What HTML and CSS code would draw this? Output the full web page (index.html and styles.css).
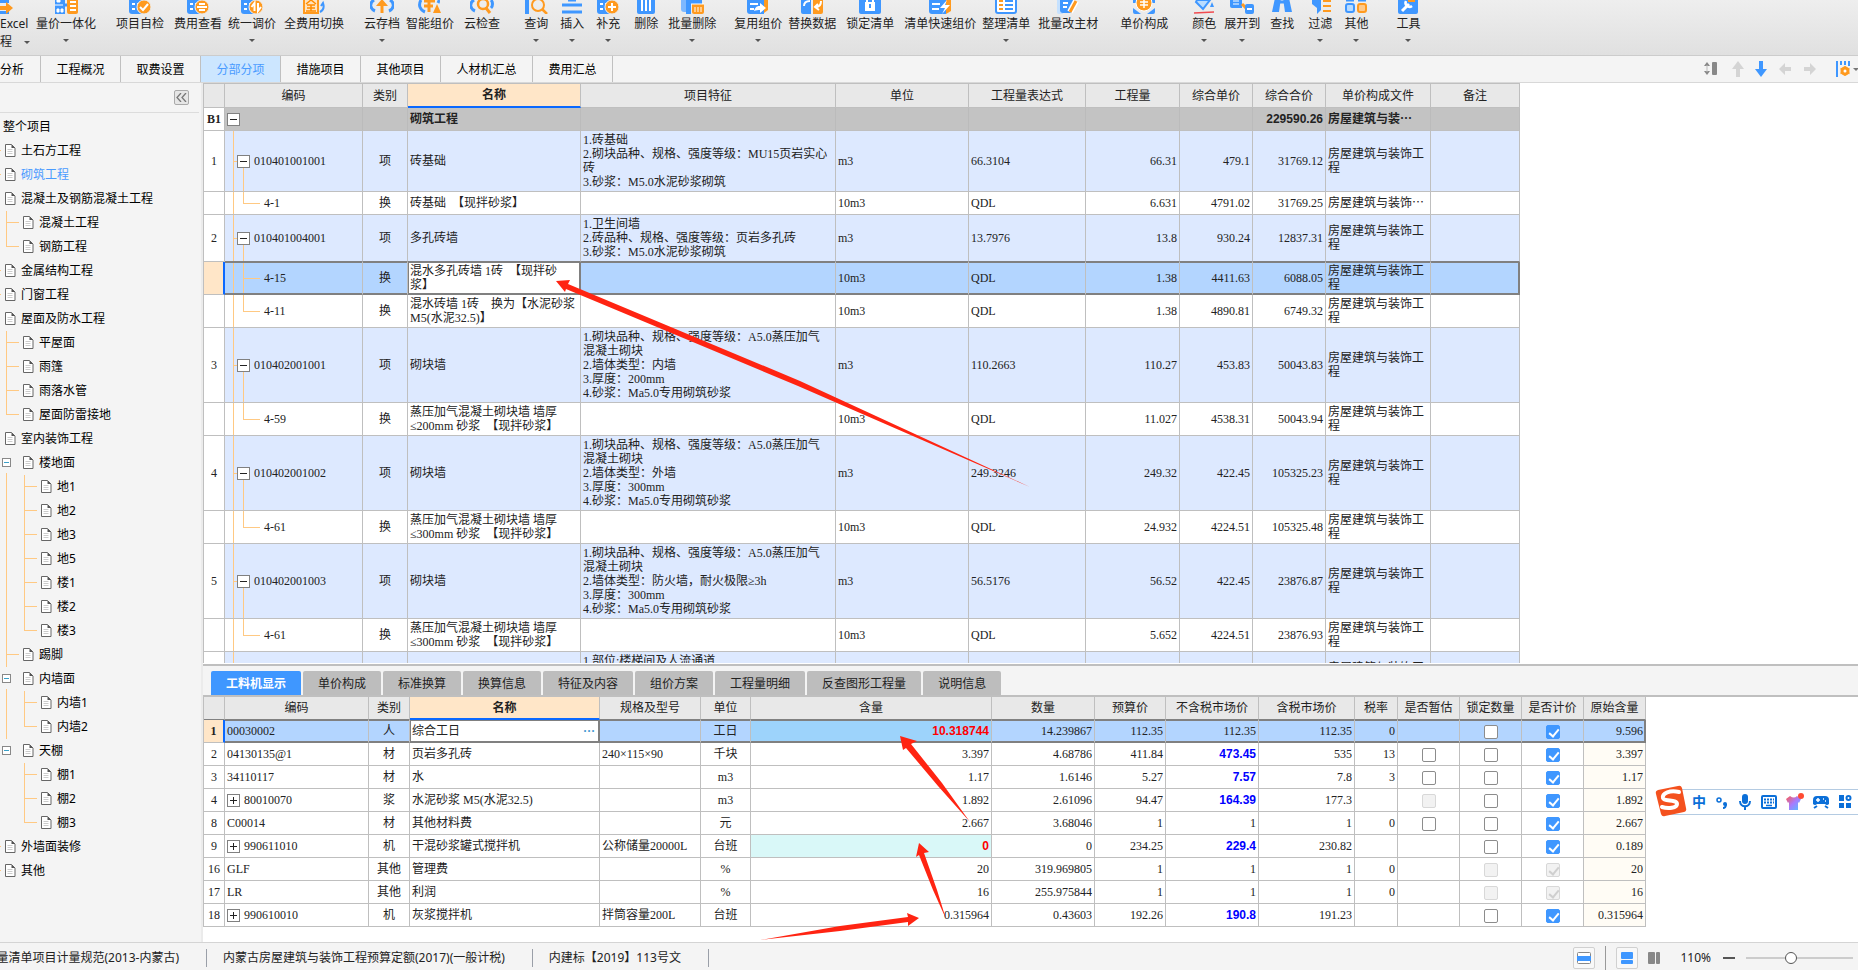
FILE: index.html
```html
<!DOCTYPE html>
<html lang="zh-CN">
<head>
<meta charset="utf-8">
<title>分部分项</title>
<link rel="stylesheet" href="styles.css">
</head>
<body>
<svg class="defs" aria-hidden="true">
  <symbol id="doc" viewBox="0 0 11 13"><path d="M.5 .5h6l3.500 3.500v8.500H.5z" fill="#fff" stroke="#666"/><path d="M6.500 .5v3.500H10z" fill="#555"/><path d="M2.500 5.500h5M2.500 7.500h5M2.500 9.500h5" stroke="#ccc"/></symbol>
  <symbol id="list" viewBox="0 0 24 14"><path d="M1 0h17v14H4a3 3 0 0 1-3-3z" fill="#3f97ff"/><path d="M4 4h3M9 4h8M4 9h3M9 9h5" stroke="#fff" stroke-width="2"/></symbol>
</svg>

<header class="toolbar">
  <button class="tool tool-first"><svg class="tool-icon" viewBox="0 0 24 14"><path d="M0 0h9v3H0zM0 11h9v3H0z" fill="#3f97ff"/><path d="M0 6h6V2l7 6-7 6v-4H0z" fill="#ff9a1f"/></svg><span>Excel</span><span class="second">程<i class="caret"></i></span></button>
  <button class="tool gap-8"><svg class="tool-icon" viewBox="0 0 24 14"><path d="M1 0h10v14H1z" fill="#3f97ff"/><path d="M3 0h3v2H3zM3 9h2v3H3zM7 9h2v3H7zM1 5h9" fill="#fff" stroke="#fff" stroke-width="1"/><path d="M9 5h5" stroke="#3f97ff" stroke-width="3"/><rect x="13" y="-2" width="11" height="16" rx="2" fill="#ff9a1f"/><path d="M16 2h6M16 6h6M16 10h6" stroke="#fff" stroke-width="2"/></svg><span>量价一体化</span><i class="caret"></i></button>
  <button class="tool gap-20"><svg class="tool-icon" viewBox="0 0 24 14"><use href="#list"/><circle cx="16" cy="7" r="7" fill="#ff9a1f" stroke="#eee"/><path d="M12 7l3 3 5-6" fill="none" stroke="#fff" stroke-width="2"/></svg><span>项目自检</span></button>
  <button class="tool gap-10"><svg class="tool-icon" viewBox="0 0 24 14"><use href="#list"/><circle cx="16" cy="7" r="7" fill="#ff9a1f" stroke="#eee"/><path d="M11 7h10M13 4h6M13 10h6" fill="none" stroke="#fff" stroke-width="2"/></svg><span>费用查看</span></button>
  <button class="tool gap-6"><svg class="tool-icon" viewBox="0 0 24 14"><use href="#list"/><circle cx="16" cy="7" r="7" fill="#ff9a1f" stroke="#eee"/><path d="M14.500 11V3l-3 4M18 3v8l3-4" fill="none" stroke="#fff" stroke-width="2"/></svg><span>统一调价</span><i class="caret"></i></button>
  <button class="tool gap-8"><svg class="tool-icon" viewBox="0 0 24 14"><path d="M2 0v13h14V0" fill="#ffe3bf" stroke="#ff9a1f" stroke-width="2"/><path d="M9 0L4 4M9 0l5 4M5 5h8M5 8h8M4 11h10M9 5v6" fill="none" stroke="#ff8c00" stroke-width="1.500"/><path d="M18 12c4-2 4-6 3-9l-2 3" fill="none" stroke="#3f97ff" stroke-width="2"/></svg><span>全费用切换</span></button>
  <button class="tool gap-20"><svg class="tool-icon" viewBox="0 0 24 14"><path d="M5 11C0 9-1 3 4 0M19 11c5-2 6-8 1-11" fill="none" stroke="#3f97ff" stroke-width="3"/><path d="M12-1l6 7h-4.500v7h-3V6H6z" fill="#ff9a1f"/></svg><span>云存档</span><i class="caret"></i></button>
  <button class="tool gap-6"><svg class="tool-icon" viewBox="0 0 24 14"><path d="M7 12C2 10 0 5 3 0M20 3c1-2 1-2 0-3" fill="none" stroke="#3f97ff" stroke-width="3"/><path d="M6 1h11M6 6h9M11 0v12" stroke="#ff9a1f" stroke-width="3"/><path d="M19 4l4 9h-8z" fill="#ff9a1f"/></svg><span>智能组价</span></button>
  <button class="tool gap-10"><svg class="tool-icon" viewBox="0 0 24 14"><path d="M5 11C0 9-1 3 4 0M21 8c2-2 2-6 0-8" fill="none" stroke="#3f97ff" stroke-width="3"/><circle cx="13" cy="4" r="5" fill="none" stroke="#ff9a1f" stroke-width="2.500"/><path d="M16 8l4 5" stroke="#ff9a1f" stroke-width="3"/></svg><span>云检查</span></button>
  <button class="tool gap-24"><svg class="tool-icon" viewBox="0 0 24 14"><path d="M3 0v14" stroke="#3f97ff" stroke-width="4"/><circle cx="14" cy="5" r="6" fill="none" stroke="#ff9a1f" stroke-width="2"/><path d="M18 9l5 5" stroke="#ff9a1f" stroke-width="2.500"/></svg><span>查询</span><i class="caret"></i></button>
  <button class="tool gap-12"><svg class="tool-icon" viewBox="0 0 24 14"><path d="M2 5h20M2 12h20" stroke="#3f97ff" stroke-width="3"/><path d="M8 0h8" stroke="#3f97ff" stroke-width="3"/></svg><span>插入</span><i class="caret"></i></button>
  <button class="tool gap-12"><svg class="tool-icon" viewBox="0 0 24 14"><use href="#list"/><circle cx="16" cy="7" r="7" fill="#ff9a1f" stroke="#eee"/><path d="M12 7h8M16 3v8" stroke="#fff" stroke-width="2"/></svg><span>补充</span><i class="caret"></i></button>
  <button class="tool gap-14"><svg class="tool-icon" viewBox="0 0 24 14"><path d="M3-2h18v14a2 2 0 0 1-2 2H5a2 2 0 0 1-2-2z" fill="#3f97ff"/><path d="M8 0v11M12 0v11M16 0v11" stroke="#fff" stroke-width="2"/></svg><span>删除</span></button>
  <button class="tool gap-10"><svg class="tool-icon" viewBox="0 0 24 14"><path d="M1 0h9v12H4a3 3 0 0 1-3-3z" fill="#7db8ff"/><path d="M6 0h16v4H11v10H6z" fill="#3f97ff"/><path d="M12 4h12v8a2 2 0 0 1-2 2h-8a2 2 0 0 1-2-2z" fill="#ff9a1f"/><path d="M11 4h13M15 7v5M18 7v5M21 7v5" stroke="#fff" stroke-width="1"/></svg><span>批量删除</span><i class="caret"></i></button>
  <button class="tool gap-18"><svg class="tool-icon" viewBox="0 0 24 14"><path d="M1 0h17v14H4a3 3 0 0 1-3-3z" fill="#3f97ff"/><path d="M18 0h4v10l-4 3z" fill="#ff9a1f"/><path d="M4 4h8M4 9h4" stroke="#fff" stroke-width="2"/><path d="M8 11c2-6 5-5 6-5V3l6 5-6 5v-3c-2 0-4 0-6 1z" fill="#fff"/></svg><span>复用组价</span><i class="caret"></i></button>
  <button class="tool gap-6"><svg class="tool-icon" viewBox="0 0 24 14"><path d="M1 0h10v14H3a2 2 0 0 1-2-2z" fill="#3f97ff"/><path d="M13 0h10v12a2 2 0 0 1-2 2h-8z" fill="#ff9a1f"/><path d="M4 6c0-4 3-5 6-5M21 1c0 4-2 6-5 6m2-3l-3 3 4 3" fill="none" stroke="#fff" stroke-width="2"/></svg><span>替换数据</span></button>
  <button class="tool gap-10"><svg class="tool-icon" viewBox="0 0 24 14"><path d="M1-2h22v14a2 2 0 0 1-2 2H3a2 2 0 0 1-2-2z" fill="#3f97ff"/><path d="M7 2h10v9H7z" fill="#fff"/><path d="M9 3V-2M15 3V-2" stroke="#fff" stroke-width="2"/><path d="M12 4v4" stroke="#3f97ff" stroke-width="2"/></svg><span>锁定清单</span></button>
  <button class="tool gap-10"><svg class="tool-icon" viewBox="0 0 24 14"><path d="M1 0h17v14H4a3 3 0 0 1-3-3z" fill="#3f97ff"/><path d="M18 0h5v11l-5 3z" fill="#ff9a1f"/><path d="M4 4h8M4 9h7" stroke="#fff" stroke-width="2"/><path d="M19 0l-7 8h5l-3 6 8-9h-5z" fill="#fff"/></svg><span>清单快速组价</span></button>
  <button class="tool gap-6"><svg class="tool-icon" viewBox="0 0 24 14"><path d="M2-2v13a2 2 0 0 0 2 2h16a2 2 0 0 0 2-2V-2" fill="#fff" stroke="#3f97ff" stroke-width="2"/><path d="M5 1h4M5 5h4M5 9h4" stroke="#ff9a1f" stroke-width="2"/><path d="M11 1h8M11 5h8M11 9h8" stroke="#3f97ff" stroke-width="2"/></svg><span>整理清单</span><i class="caret"></i></button>
  <button class="tool gap-8"><svg class="tool-icon" viewBox="0 0 24 14"><path d="M1 0h6v14H3a2 2 0 0 1-2-2z" fill="#c5e1ff"/><path d="M4 0h13v13H7a3 3 0 0 1-3-3z" fill="#3f97ff"/><path d="M7 3h5M7 7h4" stroke="#fff" stroke-width="2"/><path d="M20 1l-6 11" stroke="#fff" stroke-width="6"/><path d="M20 1l-6 11" stroke="#ff9a1f" stroke-width="3"/></svg><span>批量改主材</span></button>
  <button class="tool gap-22"><svg class="tool-icon" viewBox="0 0 24 14"><path d="M1 0h22v3H1zM1 8l8 6H3a2 2 0 0 1-2-2zM23 8l-8 6h6a2 2 0 0 0 2-2z" fill="#3f97ff"/><circle cx="12" cy="3" r="8" fill="#ff9a1f" stroke="#fff"/><path d="M8 2h8M8 5h8M12-1v9" stroke="#fff" stroke-width="1.500"/></svg><span>单价构成</span></button>
  <button class="tool gap-24"><svg class="tool-icon" viewBox="0 0 24 14"><path d="M4 2l7 7 7-9H5z" fill="#b9dcff" stroke="#3f97ff" stroke-width="2"/><path d="M20 2l2 5h-4z" fill="#3f97ff"/><path d="M2 13l20-1" stroke="#f04b50" stroke-width="1.500"/></svg><span>颜色</span><i class="caret"></i></button>
  <button class="tool gap-8"><svg class="tool-icon" viewBox="0 0 24 14"><path d="M0-2h12v10H2a2 2 0 0 1-2-2z" fill="#3f97ff"/><path d="M3 1h6M3 4h6" stroke="#fff"/><path d="M12 4l4 4" stroke="#ff9a1f" stroke-width="3"/><rect x="15" y="4" width="9" height="10" rx="2" fill="#3f97ff"/><path d="M17 9h5" stroke="#fff" stroke-width="2"/></svg><span>展开到</span><i class="caret"></i></button>
  <button class="tool gap-10"><svg class="tool-icon" viewBox="0 0 24 14"><path d="M5-2h6l-2 14H2zM13-2h6l3 14h-7z" fill="#3f97ff"/><path d="M9 2h6" stroke="#3f97ff" stroke-width="3"/></svg><span>查找</span></button>
  <button class="tool gap-14"><svg class="tool-icon" viewBox="0 0 24 14"><path d="M4-2h9v12l-4 4V8L4 4z" fill="#3f97ff"/><path d="M15 1h8M15 6h8M15 11h8" stroke="#ff9a1f" stroke-width="2"/></svg><span>过滤</span><i class="caret"></i></button>
  <button class="tool gap-12"><svg class="tool-icon" viewBox="0 0 24 14"><rect x="2" y="4" width="8" height="8" rx="2" fill="#b9dcff" stroke="#3f97ff" stroke-width="2"/><rect x="14" y="4" width="8" height="8" rx="2" fill="#ffc98a" stroke="#ff9a1f" stroke-width="2"/><path d="M2 0h8M14 0h8" stroke="#3f97ff" stroke-width="3"/></svg><span>其他</span><i class="caret"></i></button>
  <button class="tool gap-28"><svg class="tool-icon" viewBox="0 0 24 14"><path d="M2 0h20v12a2 2 0 0 1-2 2H4a2 2 0 0 1-2-2z" fill="#3f97ff"/><path d="M12-1h7v3h-7z" fill="#ff9a1f"/><path d="M6 11l7-7" stroke="#fff" stroke-width="3"/><path d="M10 1a4 4 0 0 0 6 5" fill="none" stroke="#fff" stroke-width="2.500"/></svg><span>工具</span><i class="caret"></i></button>
</header>

<nav class="tabs">
  <button class="tab tab-cut">分析</button><button class="tab">工程概况</button><button class="tab">取费设置</button><button class="tab active">分部分项</button><button class="tab">措施项目</button><button class="tab">其他项目</button><button class="tab tab-wide">人材机汇总</button><button class="tab">费用汇总</button>
  <div class="tab-actions">
    <button class="height" aria-label="行高"><svg width="14" height="14" viewBox="0 0 14 14"><path d="M3 0l3 4H0zM3 13l3-4H0z" fill="#888"/><path d="M3 3v7" stroke="#bbb"/><rect x="8" y="0" width="5" height="13" rx="1" fill="#888"/></svg></button>
    <button aria-label="上移"><svg width="14" height="16" viewBox="0 0 14 16"><path d="M7 0l6 8H9v8H5V8H1z" fill="#d4d4d4"/></svg></button>
    <button aria-label="下移"><svg width="14" height="16" viewBox="0 0 14 16"><path d="M7 16l6-8H9V0H5v8H1z" fill="#3f97ff"/></svg></button>
    <button aria-label="左移"><svg width="16" height="14" viewBox="0 0 16 14"><path d="M2 7l6-6v4h6v4H8v4z" fill="#d4d4d4"/></svg></button>
    <button aria-label="右移"><svg width="16" height="14" viewBox="0 0 16 14"><path d="M14 7L8 1v4H2v4h6v4z" fill="#d4d4d4"/></svg></button>
    <button class="columns" aria-label="列设置"><svg width="22" height="16" viewBox="0 0 22 16"><path d="M1 0v16M5 0v4M9 0v4M13 0v5" stroke="#3f97ff" stroke-width="2"/><circle cx="9" cy="10" r="3" fill="none" stroke="#ff9a1f" stroke-width="3"/><path d="M9 5v10M4.500 7.500l9 5M4.500 12.500l9-5" stroke="#ff9a1f" stroke-width="1.500"/><circle cx="9" cy="10" r="1.500" fill="#fff"/><path d="M17 7h6l-3 3z" fill="#777"/></svg></button>
  </div>
</nav>

<div class="workspace">
  <aside class="sidebar">
    <div class="side-head"><button class="collapse" aria-label="收起"><svg width="11" height="9" viewBox="0 0 11 9"><path d="M5 0L1 4.500 5 9M10 0L6 4.500 10 9" fill="none" stroke="#777" stroke-width="1.300"/></svg></button></div>
    <ul class="tree">
      <li><div class="node root">整个项目</div></li>
      <li class="stub"><div class="node"><svg class="doc"><use href="#doc"/></svg>土石方工程</div></li>
      <li class="stub"><div class="node current"><svg class="doc"><use href="#doc"/></svg>砌筑工程</div></li>
      <li><div class="node"><svg class="doc"><use href="#doc"/></svg>混凝土及钢筋混凝土工程</div>
        <ul>
          <li><div class="node"><svg class="doc"><use href="#doc"/></svg>混凝土工程</div></li>
          <li><div class="node"><svg class="doc"><use href="#doc"/></svg>钢筋工程</div></li>
        </ul></li>
      <li class="stub"><div class="node"><svg class="doc"><use href="#doc"/></svg>金属结构工程</div></li>
      <li class="stub"><div class="node"><svg class="doc"><use href="#doc"/></svg>门窗工程</div></li>
      <li><div class="node"><svg class="doc"><use href="#doc"/></svg>屋面及防水工程</div>
        <ul>
          <li><div class="node"><svg class="doc"><use href="#doc"/></svg>平屋面</div></li>
          <li><div class="node"><svg class="doc"><use href="#doc"/></svg>雨篷</div></li>
          <li><div class="node"><svg class="doc"><use href="#doc"/></svg>雨落水管</div></li>
          <li><div class="node"><svg class="doc"><use href="#doc"/></svg>屋面防雷接地</div></li>
        </ul></li>
      <li><div class="node"><svg class="doc"><use href="#doc"/></svg>室内装饰工程</div>
        <ul>
          <li class="open"><div class="node"><button class="twist" aria-label="收起楼地面"></button><svg class="doc"><use href="#doc"/></svg>楼地面</div>
            <ul>
              <li><div class="node"><svg class="doc"><use href="#doc"/></svg>地1</div></li>
              <li><div class="node"><svg class="doc"><use href="#doc"/></svg>地2</div></li>
              <li><div class="node"><svg class="doc"><use href="#doc"/></svg>地3</div></li>
              <li><div class="node"><svg class="doc"><use href="#doc"/></svg>地5</div></li>
              <li><div class="node"><svg class="doc"><use href="#doc"/></svg>楼1</div></li>
              <li><div class="node"><svg class="doc"><use href="#doc"/></svg>楼2</div></li>
              <li><div class="node"><svg class="doc"><use href="#doc"/></svg>楼3</div></li>
            </ul></li>
          <li><div class="node"><svg class="doc"><use href="#doc"/></svg>踢脚</div></li>
          <li class="open"><div class="node"><button class="twist" aria-label="收起内墙面"></button><svg class="doc"><use href="#doc"/></svg>内墙面</div>
            <ul>
              <li><div class="node"><svg class="doc"><use href="#doc"/></svg>内墙1</div></li>
              <li><div class="node"><svg class="doc"><use href="#doc"/></svg>内墙2</div></li>
            </ul></li>
          <li class="open"><div class="node"><button class="twist" aria-label="收起天棚"></button><svg class="doc"><use href="#doc"/></svg>天棚</div>
            <ul>
              <li><div class="node"><svg class="doc"><use href="#doc"/></svg>棚1</div></li>
              <li><div class="node"><svg class="doc"><use href="#doc"/></svg>棚2</div></li>
              <li><div class="node"><svg class="doc"><use href="#doc"/></svg>棚3</div></li>
            </ul></li>
        </ul></li>
      <li class="stub"><div class="node"><svg class="doc"><use href="#doc"/></svg>外墙面装修</div></li>
      <li class="stub"><div class="node"><svg class="doc"><use href="#doc"/></svg>其他</div></li>
    </ul>
  </aside>

  <main class="main">
    <section class="upper">
      <table class="grid bill">
        <colgroup><col class="w-21"><col class="w-138"><col class="w-45"><col class="w-173"><col class="w-255"><col class="w-133"><col class="w-117"><col class="w-94"><col class="w-73"><col class="w-73"><col class="w-105"><col class="w-89"></colgroup>
        <thead><tr><th></th><th>编码</th><th>类别</th><th class="hot">名称</th><th>项目特征</th><th>单位</th><th>工程量表达式</th><th>工程量</th><th>综合单价</th><th>综合合价</th><th>单价构成文件</th><th>备注</th></tr></thead>
        <tbody>
          <tr class="part"><td class="idx">B1</td><td class="code"><button class="box" aria-label="收起"></button></td><td></td><td>砌筑工程</td><td></td><td></td><td></td><td></td><td></td><td class="num">229590.26</td><td>房屋建筑与装⋯</td><td></td></tr>
          <tr class="item"><td class="idx">1</td><td class="code parent"><button class="box" aria-label="收起"></button>010401001001</td><td class="mid">项</td><td>砖基础</td><td>1.砖基础<br>2.砌块品种、规格、强度等级：MU15页岩实心<br>砖<br>3.砂浆：M5.0水泥砂浆砌筑</td><td>m3</td><td>66.3104</td><td class="num">66.31</td><td class="num">479.1</td><td class="num">31769.12</td><td>房屋建筑与装饰工<br>程</td><td></td></tr>
          <tr><td class="idx"></td><td class="code child last">4-1</td><td class="mid">换</td><td>砖基础　【现拌砂浆】</td><td></td><td>10m3</td><td>QDL</td><td class="num">6.631</td><td class="num">4791.02</td><td class="num">31769.25</td><td>房屋建筑与装饰⋯</td><td></td></tr>
          <tr class="item before"><td class="idx">2</td><td class="code parent"><button class="box" aria-label="收起"></button>010401004001</td><td class="mid">项</td><td>多孔砖墙</td><td>1.卫生间墙<br>2.砖品种、规格、强度等级：页岩多孔砖<br>3.砂浆：M5.0水泥砂浆砌筑</td><td>m3</td><td>13.7976</td><td class="num">13.8</td><td class="num">930.24</td><td class="num">12837.31</td><td>房屋建筑与装饰工<br>程</td><td></td></tr>
          <tr class="sel"><td class="idx"></td><td class="code child">4-15</td><td class="mid">换</td><td class="edit">混水多孔砖墙 1砖　【现拌砂<br>浆】</td><td></td><td>10m3</td><td>QDL</td><td class="num">1.38</td><td class="num">4411.63</td><td class="num">6088.05</td><td>房屋建筑与装饰工<br>程</td><td></td></tr>
          <tr><td class="idx"></td><td class="code child last">4-11</td><td class="mid">换</td><td>混水砖墙 1砖　换为【水泥砂浆<br>M5(水泥32.5)】</td><td></td><td>10m3</td><td>QDL</td><td class="num">1.38</td><td class="num">4890.81</td><td class="num">6749.32</td><td>房屋建筑与装饰工<br>程</td><td></td></tr>
          <tr class="item"><td class="idx">3</td><td class="code parent"><button class="box" aria-label="收起"></button>010402001001</td><td class="mid">项</td><td>砌块墙</td><td>1.砌块品种、规格、强度等级：A5.0蒸压加气<br>混凝土砌块<br>2.墙体类型：内墙<br>3.厚度：200mm<br>4.砂浆：Ma5.0专用砌筑砂浆</td><td>m3</td><td>110.2663</td><td class="num">110.27</td><td class="num">453.83</td><td class="num">50043.83</td><td>房屋建筑与装饰工<br>程</td><td></td></tr>
          <tr><td class="idx"></td><td class="code child last">4-59</td><td class="mid">换</td><td>蒸压加气混凝土砌块墙 墙厚<br>≤200mm 砂浆　【现拌砂浆】</td><td></td><td>10m3</td><td>QDL</td><td class="num">11.027</td><td class="num">4538.31</td><td class="num">50043.94</td><td>房屋建筑与装饰工<br>程</td><td></td></tr>
          <tr class="item"><td class="idx">4</td><td class="code parent"><button class="box" aria-label="收起"></button>010402001002</td><td class="mid">项</td><td>砌块墙</td><td>1.砌块品种、规格、强度等级：A5.0蒸压加气<br>混凝土砌块<br>2.墙体类型：外墙<br>3.厚度：300mm<br>4.砂浆：Ma5.0专用砌筑砂浆</td><td>m3</td><td>249.3246</td><td class="num">249.32</td><td class="num">422.45</td><td class="num">105325.23</td><td>房屋建筑与装饰工<br>程</td><td></td></tr>
          <tr><td class="idx"></td><td class="code child last">4-61</td><td class="mid">换</td><td>蒸压加气混凝土砌块墙 墙厚<br>≤300mm 砂浆　【现拌砂浆】</td><td></td><td>10m3</td><td>QDL</td><td class="num">24.932</td><td class="num">4224.51</td><td class="num">105325.48</td><td>房屋建筑与装饰工<br>程</td><td></td></tr>
          <tr class="item"><td class="idx">5</td><td class="code parent"><button class="box" aria-label="收起"></button>010402001003</td><td class="mid">项</td><td>砌块墙</td><td>1.砌块品种、规格、强度等级：A5.0蒸压加气<br>混凝土砌块<br>2.墙体类型：防火墙，耐火极限≥3h<br>3.厚度：300mm<br>4.砂浆：Ma5.0专用砌筑砂浆</td><td>m3</td><td>56.5176</td><td class="num">56.52</td><td class="num">422.45</td><td class="num">23876.87</td><td>房屋建筑与装饰工<br>程</td><td></td></tr>
          <tr><td class="idx"></td><td class="code child last">4-61</td><td class="mid">换</td><td>蒸压加气混凝土砌块墙 墙厚<br>≤300mm 砂浆　【现拌砂浆】</td><td></td><td>10m3</td><td>QDL</td><td class="num">5.652</td><td class="num">4224.51</td><td class="num">23876.93</td><td>房屋建筑与装饰工<br>程</td><td></td></tr>
          <tr class="item"><td class="idx"></td><td class="code"></td><td></td><td></td><td>1.部位:楼梯间及人流通道<br><br><br></td><td></td><td></td><td></td><td></td><td></td><td>房屋建筑与装饰工<br>程</td><td></td></tr>
        </tbody>
      </table>
    </section>

    <section class="lower">
      <nav class="subtabs"><button class="active">工料机显示</button><button>单价构成</button><button>标准换算</button><button>换算信息</button><button>特征及内容</button><button>组价方案</button><button>工程量明细</button><button>反查图形工程量</button><button>说明信息</button></nav>
      <div class="detail-wrap">
      <table class="grid detail">
        <colgroup><col class="w-21"><col class="w-144"><col class="w-41"><col class="w-190"><col class="w-101"><col class="w-50"><col class="w-241"><col class="w-103"><col class="w-71"><col class="w-93"><col class="w-96"><col class="w-43"><col class="w-62"><col class="w-62"><col class="w-62"><col class="w-62"></colgroup>
        <thead><tr class="before"><th></th><th>编码</th><th>类别</th><th class="hot">名称</th><th>规格及型号</th><th>单位</th><th>含量</th><th>数量</th><th>预算价</th><th>不含税市场价</th><th>含税市场价</th><th>税率</th><th>是否暂估</th><th>锁定数量</th><th>是否计价</th><th>原始含量</th></tr></thead>
        <tbody>
          <tr class="sel"><td class="idx">1</td><td>00030002</td><td class="mid">人</td><td class="edit"><div class="pick">综合工日<button aria-label="选择">···</button></div></td><td></td><td class="mid">工日</td><td class="num red amount">10.318744</td><td class="num">14.239867</td><td class="num">112.35</td><td class="num">112.35</td><td class="num">112.35</td><td class="num">0</td><td></td><td class="mid"><input type="checkbox" aria-label="锁定数量"></td><td class="mid"><input type="checkbox" aria-label="是否计价" checked></td><td class="num">9.596</td></tr>
          <tr><td class="idx">2</td><td>04130135@1</td><td class="mid">材</td><td>页岩多孔砖</td><td>240×115×90</td><td class="mid">千块</td><td class="num">3.397</td><td class="num">4.68786</td><td class="num">411.84</td><td class="num blue">473.45</td><td class="num">535</td><td class="num">13</td><td class="mid"><input type="checkbox" aria-label="是否暂估"></td><td class="mid"><input type="checkbox" aria-label="锁定数量"></td><td class="mid"><input type="checkbox" aria-label="是否计价" checked></td><td class="num orig">3.397</td></tr>
          <tr><td class="idx">3</td><td>34110117</td><td class="mid">材</td><td>水</td><td></td><td class="mid">m3</td><td class="num">1.17</td><td class="num">1.6146</td><td class="num">5.27</td><td class="num blue">7.57</td><td class="num">7.8</td><td class="num">3</td><td class="mid"><input type="checkbox" aria-label="是否暂估"></td><td class="mid"><input type="checkbox" aria-label="锁定数量"></td><td class="mid"><input type="checkbox" aria-label="是否计价" checked></td><td class="num orig">1.17</td></tr>
          <tr><td class="idx">4</td><td><button class="box plus" aria-label="展开"></button>80010070</td><td class="mid">浆</td><td>水泥砂浆 M5(水泥32.5)</td><td></td><td class="mid">m3</td><td class="num">1.892</td><td class="num">2.61096</td><td class="num">94.47</td><td class="num blue">164.39</td><td class="num">177.3</td><td></td><td class="mid"><input type="checkbox" aria-label="是否暂估" disabled></td><td class="mid"><input type="checkbox" aria-label="锁定数量"></td><td class="mid"><input type="checkbox" aria-label="是否计价" checked></td><td class="num orig">1.892</td></tr>
          <tr><td class="idx">8</td><td>C00014</td><td class="mid">材</td><td>其他材料费</td><td></td><td class="mid">元</td><td class="num">2.667</td><td class="num">3.68046</td><td class="num">1</td><td class="num">1</td><td class="num">1</td><td class="num">0</td><td class="mid"><input type="checkbox" aria-label="是否暂估"></td><td class="mid"><input type="checkbox" aria-label="锁定数量"></td><td class="mid"><input type="checkbox" aria-label="是否计价" checked></td><td class="num orig">2.667</td></tr>
          <tr><td class="idx">9</td><td><button class="box plus" aria-label="展开"></button>990611010</td><td class="mid">机</td><td>干混砂浆罐式搅拌机</td><td>公称储量20000L</td><td class="mid">台班</td><td class="num red changed">0</td><td class="num">0</td><td class="num">234.25</td><td class="num blue">229.4</td><td class="num">230.82</td><td></td><td></td><td class="mid"><input type="checkbox" aria-label="锁定数量"></td><td class="mid"><input type="checkbox" aria-label="是否计价" checked></td><td class="num orig">0.189</td></tr>
          <tr><td class="idx">16</td><td>GLF</td><td class="mid">其他</td><td>管理费</td><td></td><td class="mid">%</td><td class="num">20</td><td class="num">319.969805</td><td class="num">1</td><td class="num">1</td><td class="num">1</td><td class="num">0</td><td></td><td class="mid"><input type="checkbox" aria-label="锁定数量" disabled></td><td class="mid"><input type="checkbox" aria-label="是否计价" checked disabled></td><td class="num orig">20</td></tr>
          <tr><td class="idx">17</td><td>LR</td><td class="mid">其他</td><td>利润</td><td></td><td class="mid">%</td><td class="num">16</td><td class="num">255.975844</td><td class="num">1</td><td class="num">1</td><td class="num">1</td><td class="num">0</td><td></td><td class="mid"><input type="checkbox" aria-label="锁定数量" disabled></td><td class="mid"><input type="checkbox" aria-label="是否计价" checked disabled></td><td class="num orig">16</td></tr>
          <tr><td class="idx">18</td><td><button class="box plus" aria-label="展开"></button>990610010</td><td class="mid">机</td><td>灰浆搅拌机</td><td>拌筒容量200L</td><td class="mid">台班</td><td class="num">0.315964</td><td class="num">0.43603</td><td class="num">192.26</td><td class="num blue">190.8</td><td class="num">191.23</td><td></td><td></td><td class="mid"><input type="checkbox" aria-label="锁定数量"></td><td class="mid"><input type="checkbox" aria-label="是否计价" checked></td><td class="num orig">0.315964</td></tr>
        </tbody>
      </table>
      </div>
    </section>
  </main>
</div>

<footer class="status">
  <span class="status-cut">量清单项目计量规范(2013-内蒙古)</span>
  <span>内蒙古房屋建筑与装饰工程预算定额(2017)(一般计税)</span>
  <span>内建标【2019】113号文</span>
  <div class="view">
    <button class="framed" aria-label="分栏"><svg width="14" height="14" viewBox="0 0 14 14"><rect x=".5" y="1.500" width="13" height="11" rx="1" fill="#fff" stroke="#888"/><path d="M0 5h14v5H0z" fill="#3f97ff"/></svg></button>
    <i class="rule"></i>
    <button class="framed" aria-label="上下布局"><svg width="12" height="14" viewBox="0 0 12 14"><rect y="1" width="12" height="7" rx="1" fill="#3f97ff"/><rect y="9" width="12" height="4" rx="1" fill="#3f97ff"/></svg></button>
    <button class="plain" aria-label="左右布局"><svg width="12" height="14" viewBox="0 0 12 14"><rect y="1" width="7" height="12" rx="1" fill="#888"/><rect x="8" y="1" width="4" height="12" rx="1" fill="#888"/></svg></button>
    <label class="zoom-text" for="zoom">110%</label>
    <button class="minus" aria-label="缩小"></button>
    <input id="zoom" class="zoom" type="range" min="0" max="100" value="41">
  </div>
</footer>

<div class="ime">
  <svg class="ime-logo" width="32" height="32" viewBox="0 0 32 32"><path d="M3 5L23 1q3-1 4 2l4 20q1 3-2 4L10 31q-3 1-4-2L1 9q-1-3 2-4z" fill="#f4511e"/><path d="M24 7C15 5 7 8 8 13c1 4 14 1 14 6 0 4-9 5-15 3" fill="none" stroke="#fff" stroke-width="4" stroke-linecap="round"/></svg>
  <button>中</button>
  <button aria-label="标点"><svg width="14" height="16" viewBox="0 0 14 16"><circle cx="4" cy="6" r="2" fill="none" stroke="#0b6fd8" stroke-width="1.500"/><circle cx="10" cy="10" r="2" fill="#0b6fd8"/><path d="M11 10q0 4-3 4" fill="none" stroke="#0b6fd8" stroke-width="2"/></svg></button>
  <button aria-label="语音"><svg width="14" height="16" viewBox="0 0 14 16"><rect x="4" y="0" width="6" height="10" rx="3" fill="#0b6fd8"/><path d="M2 7c0 7 10 7 10 0M7 12v4" fill="none" stroke="#0b6fd8" stroke-width="2"/></svg></button>
  <button aria-label="键盘"><svg width="16" height="14" viewBox="0 0 16 14"><rect x="1" y="1" width="14" height="12" rx="1" fill="#fff" stroke="#0b6fd8" stroke-width="2"/><path d="M3 4.500h10M3 7.500h10" stroke="#0b6fd8" stroke-width="2" stroke-dasharray="2 1"/><path d="M5 10.500h6" stroke="#0b6fd8" stroke-width="1.500"/></svg></button>
  <button aria-label="皮肤"><svg width="18" height="18" viewBox="0 0 18 18"><defs><linearGradient id="shirt" x1="0" y1="0" x2="1" y2="1"><stop offset="0" stop-color="#ff5a4d"/><stop offset=".5" stop-color="#a77bff"/><stop offset="1" stop-color="#4cc4ff"/></linearGradient></defs><path d="M0 6l4-3q4 3 7 0l4 3-2 4-1-1v8H3V9l-1 1z" fill="url(#shirt)"/><circle cx="15" cy="3" r="3" fill="#ff4b32"/></svg></button>
  <button aria-label="游戏"><svg width="16" height="16" viewBox="0 0 16 16"><path d="M4 2h8a4 4 0 0 1 4 4v4q-2 2-4 0H4q-2 2-4 0V6a4 4 0 0 1 4-4z" fill="#0b6fd8"/><path d="M3 6h4M5 4v4M10 5h1M12 7h1" stroke="#fff" stroke-width="1.500"/><path d="M1 14l3-2M15 14l-3-2" stroke="#0b6fd8" stroke-width="2"/></svg></button>
  <button aria-label="更多"><svg width="14" height="14" viewBox="0 0 14 14"><path d="M1 0h5v6H1zM1 8h5v5H1zM8 8h5v5H8z" fill="#0b6fd8"/><circle cx="10.500" cy="3" r="2" fill="none" stroke="#0b6fd8" stroke-width="2"/></svg></button>
</div>

<svg class="marks" width="1100" height="970" viewBox="0 0 1100 970" aria-hidden="true">
  <g fill="#ff2412">
    <path d="M556 281L570 280 568 284 800 381 1030 487 798 386 566 289 565 292z"/>
    <path d="M900 736L917 741 911 744 942 783 970 822 938 786 906 748 903 750z"/>
    <path d="M919 843L929 852 924 853 937 890 946 919 933 890 919 855 916 857z"/>
    <path d="M919 918L908 926 908 922 840 931 760 940 840 926 908 917 907 913z"/>
  </g>
</svg>
</body>
</html>
```
FILE: styles.css
```css
* { box-sizing: border-box; }
body {
  margin: 0;
  height: 100vh;
  display: flex;
  flex-direction: column;
  overflow: hidden;
  position: relative;
  background: #fff;
  color: #222;
  font: 12px/16px "Noto Sans", "Noto Sans CJK SC", sans-serif;
}
button {
  margin: 0;
  padding: 0;
  border: 0;
  background: none;
  color: inherit;
  font: inherit;
  white-space: nowrap;
}
.defs { position: absolute; width: 0; height: 0; }

/* toolbar */
.toolbar {
  flex: none;
  height: 56px;
  display: flex;
  align-items: flex-start;
  background: linear-gradient(#eeeeee, #e0e0e0);
  border-bottom: 1px solid #cccccc;
}
.tool {
  flex: none;
  display: flex;
  flex-direction: column;
  align-items: center;
  gap: 2px;
}
.tool-icon { width: 24px; height: 14px; overflow: hidden; }
.tool-first { align-items: flex-start; width: 28px; }
.second { display: flex; align-items: center; gap: 12px; }
.caret {
  margin-top: 5px;
  border: 3px solid transparent;
  border-top: 3px solid #555;
  border-bottom: 0;
}
.second .caret { margin: 0; }
.gap-6 { margin-left: 6px; }
.gap-8 { margin-left: 8px; }
.gap-10 { margin-left: 10px; }
.gap-12 { margin-left: 12px; }
.gap-14 { margin-left: 14px; }
.gap-18 { margin-left: 18px; }
.gap-20 { margin-left: 20px; }
.gap-22 { margin-left: 22px; }
.gap-24 { margin-left: 24px; }
.gap-28 { margin-left: 28px; }

/* page tabs */
.tabs {
  flex: none;
  height: 27px;
  display: flex;
  background: #f4f4f4;
  border-bottom: 1px solid #d8d8d8;
  color: #000;
}
.tab { width: 80px; padding-top: 2px; border-right: 1px solid #c0c0c0; }
.tab-cut { width: 41px; padding-right: 16px; text-align: right; }
.tab-wide { width: 92px; }
.tab.active { background: #cce6ff; color: #4a9bff; }
.tab-actions {
  margin-left: auto;
  display: flex;
  align-items: center;
  gap: 9px;
}
.tab-actions button { display: flex; }
.tab-actions .height { margin-right: 4px; }
.tab-actions .columns { margin-left: 9px; }

/* workspace */
.workspace { flex: 1; min-height: 0; display: flex; }
.sidebar {
  flex: none;
  width: 203px;
  overflow: hidden;
  background: #f4f4f4;
  border-right: 2px solid #ebebeb;
  color: #000;
}
.side-head {
  height: 30px;
  margin-right: 2px;
  padding: 7px 10px 0 0;
  border-bottom: 1px solid #dcdcdc;
  display: flex;
  justify-content: flex-end;
}
.collapse {
  width: 15px;
  height: 15px;
  display: flex;
  align-items: center;
  justify-content: center;
  background: #e6e6e6;
  border: 1px solid #aaa;
  border-radius: 2px;
}
.tree, .tree ul { list-style: none; margin: 0; padding: 0; }
.tree { padding-top: 2px; }
.tree ul { margin-left: 18px; }
.tree li { position: relative; }
.node {
  height: 24px;
  padding-left: 5px;
  display: flex;
  align-items: center;
  gap: 5px;
  white-space: nowrap;
}
.root { padding-left: 3px; }
.current { color: #4a9bff; }
.doc { flex: none; width: 11px; height: 13px; margin-bottom: 2px; }
.stub::before {
  content: "";
  position: absolute;
  top: 11px;
  width: 1px;
  height: 1px;
  background: #ffc983;
}
.tree ul > li::before {
  content: "";
  position: absolute;
  left: -12px;
  top: 0;
  bottom: 0;
  width: 1px;
  background: #ffc983;
}
.tree ul > li:last-child::before { bottom: auto; height: 12px; }
.tree ul > li::after {
  content: "";
  position: absolute;
  left: -12px;
  top: 11px;
  width: 13px;
  height: 1px;
  background: #ffc983;
}
.tree ul > li.open::after { display: none; }
.tree ul > li.open::before { top: 22px; }
.tree ul > li.open:last-child::before { display: none; }
.twist {
  position: absolute;
  left: -16px;
  top: 7px;
  width: 9px;
  height: 9px;
  border: 1px solid #888;
  background: linear-gradient(#3aa0c8, #3aa0c8) center / 5px 1px no-repeat #fff;
}

/* grids */
.main { flex: 1; min-width: 0; display: flex; flex-direction: column; }
.upper { flex: 1; min-height: 0; overflow: hidden; border-bottom: 1px solid #fff; }
.grid {
  table-layout: fixed;
  border-spacing: 0;
  border-left: 1px solid #bfbfbf;
  font: 12px/14px "Liberation Serif", "Noto Sans CJK SC", serif;
}
.bill { width: 1317px; border-top: 1px solid #bfbfbf; }
.detail { width: 1443px; }
.grid th, .grid td {
  height: 23px;
  padding: 2px;
  border-right: 1px solid #bfbfbf;
  border-bottom: 1px solid #bfbfbf;
  white-space: nowrap;
  overflow: hidden;
  text-align: left;
}
.grid th {
  background: #e8e8e8;
  text-align: center;
  font-weight: 400;
}
.bill th { height: 24px; }
.grid th.hot {
  background: #ffe6c8;
  border-bottom: 2px solid #0a68ff;
  font-weight: 700;
}
.grid .idx { padding: 2px 0; text-align: center; background: #fff; }
.grid .num { text-align: right; }
.grid .mid { text-align: center; }
.item td { background-color: #dde9ff; }
.part td {
  background-color: #c3c3c3;
  border-right-color: #bbbbbb;
  font-weight: 700;
}
.part .num, .grid .red, .grid .blue {
  font-family: "Liberation Sans", sans-serif;
  font-weight: 700;
}
.grid .red { color: #ff0000; }
.grid .blue { color: #0000ff; }
.grid .changed { background: #d9f8f8; }
.grid .orig { background: #fffcf5; }
.before td, .grid .before th:not(.hot) { border-bottom-color: #808080; }
.before .idx { border-bottom-color: #bfbfbf; }
.sel td {
  background-color: #b3d5ff;
  border-bottom-color: #808080;
  box-shadow: inset 0 1px #808080, inset 0 -1px #808080;
}
.sel td:last-child {
  border-right-color: #808080;
  box-shadow: inset 0 1px #808080, inset -1px -1px #808080;
}
.sel td.idx {
  background: #ffe6c8;
  border-bottom-color: #bfbfbf;
  border-right: 2px solid #0a68ff;
  box-shadow: none;
  font-weight: 700;
}
.sel td.edit {
  background: #fff;
  border-right-color: #808080;
  box-shadow: inset 1px 1px #808080, inset -1px -1px #808080;
}
.sel td.amount { background: #9dd3fb; }
.pick { display: flex; justify-content: space-between; line-height: 14px; }
.pick button { color: #3f97d0; font-weight: 700; padding-right: 2px; }

/* outline lines inside the code column */
.code { background-repeat: no-repeat; }
.grid .parent {
  padding-left: 12px;
  background-image: linear-gradient(#ffc983, #ffc983), linear-gradient(#ffc983, #ffc983), linear-gradient(#ffc983, #ffc983);
  background-size: 1px 100%, 4px 1px, 1px 50%;
  background-position: 8px 0, 8px 50%, 18px 100%;
}
.grid .child {
  padding-left: 39px;
  background-image: linear-gradient(#ffc983, #ffc983), linear-gradient(#ffc983, #ffc983), linear-gradient(#ffc983, #ffc983);
  background-size: 1px 100%, 17px 1px, 1px 100%;
  background-position: 8px 0, 18px 50%, 18px 0;
}
.grid .child.last { background-size: 1px 100%, 17px 1px, 1px 50%; }
.bill tr:last-child .code {
  background-image: linear-gradient(#ffc983, #ffc983);
  background-size: 1px 100%;
  background-position: 8px 0;
}
.box {
  width: 13px;
  height: 13px;
  margin-right: 4px;
  border: 1px solid #808080;
  vertical-align: middle;
  background: linear-gradient(#222, #222) center / 7px 1px no-repeat #fff;
}
.plus {
  background: linear-gradient(#222, #222) center / 7px 1px no-repeat, linear-gradient(#222, #222) center / 1px 7px no-repeat #fff;
}
.grid input {
  appearance: none;
  width: 14px;
  height: 14px;
  margin: 0;
  border: 1px solid #8c8c8c;
  border-radius: 2px;
  background: #fff;
  vertical-align: middle;
  position: relative;
}
.grid input:checked { background: #3f97ff; border-color: #3f97ff; }
.grid input:checked::after {
  content: "";
  position: absolute;
  left: 4px;
  top: 1px;
  width: 4px;
  height: 8px;
  border: solid #fff;
  border-width: 0 2px 2px 0;
  transform: rotate(40deg);
}
.grid input:disabled { background: #f2f2f2; border-color: #d8d8d8; }
.grid input:disabled:checked::after { border-color: #cfcfcf; }

.w-21 { width: 21px; } .w-41 { width: 41px; } .w-43 { width: 43px; } .w-45 { width: 45px; }
.w-50 { width: 50px; } .w-62 { width: 62px; } .w-71 { width: 71px; } .w-73 { width: 73px; }
.w-89 { width: 89px; } .w-93 { width: 93px; } .w-94 { width: 94px; } .w-96 { width: 96px; }
.w-101 { width: 101px; } .w-103 { width: 103px; } .w-105 { width: 105px; } .w-117 { width: 117px; }
.w-133 { width: 133px; } .w-138 { width: 138px; } .w-144 { width: 144px; } .w-173 { width: 173px; }
.w-190 { width: 190px; } .w-241 { width: 241px; } .w-255 { width: 255px; }

/* detail pane */
.lower { flex: none; border-top: 2px solid #bfbfbf; }
.subtabs {
  height: 29px;
  padding: 5px 0 0 8px;
  display: flex;
  gap: 2px;
  background: #f4f4f4;
}
.subtabs button {
  padding: 2px 15px 0;
  background: #bdbdbd;
  border-radius: 2px 2px 0 0;
}
.subtabs .active { background: #3f97ff; color: #fff; font-weight: 700; }
.detail-wrap { border-top: 2px solid #bfbfbf; padding-bottom: 15px; }

/* status bar */
.status {
  flex: none;
  height: 28px;
  padding-top: 3px;
  display: flex;
  align-items: center;
  background: #f4f4f4;
  border-top: 1px solid #d4d4d4;
  white-space: nowrap;
}
.status > span {
  height: 18px;
  padding: 0 27px 0 16px;
  border-right: 1px solid #9a9fa8;
  line-height: 18px;
}
.status > .status-cut {
  width: 207px;
  padding-left: 0;
  display: flex;
  justify-content: flex-end;
}
.view { margin-left: auto; padding-right: 5px; display: flex; align-items: center; }
.framed {
  width: 22px;
  height: 22px;
  display: flex;
  align-items: center;
  justify-content: center;
  border: 1px solid #d0d0d0;
  border-radius: 2px;
  background: #f8f8f8;
}
.rule { width: 1px; height: 24px; margin: 0 10px; background: #999; }
.plain { display: flex; margin: 0 20px 0 10px; }
.minus { width: 12px; height: 2px; margin: 0 11px 0 12px; background: #555; }
.zoom {
  appearance: none;
  width: 107px;
  height: 14px;
  margin: 0;
  background: linear-gradient(#ccc, #ccc) center / 100% 2px no-repeat;
}
.zoom::-webkit-slider-thumb {
  appearance: none;
  width: 12px;
  height: 12px;
  border: 1px solid #555;
  border-radius: 50%;
  background: #fff;
}

/* floating input-method bar */
.ime {
  position: absolute;
  top: 789px;
  right: 0;
  width: 188px;
  height: 26px;
  padding: 0 6px 0 22px;
  display: flex;
  align-items: center;
  justify-content: space-between;
  background: #fff;
  border: solid #b4cbe2;
  border-width: 1px 0;
  color: #0b6fd8;
  font-size: 14px;
  font-weight: 700;
}
.ime button { display: flex; }
.ime-logo { position: absolute; left: -15px; top: -5px; }
.marks { position: absolute; left: 0; top: 0; pointer-events: none; }
```
